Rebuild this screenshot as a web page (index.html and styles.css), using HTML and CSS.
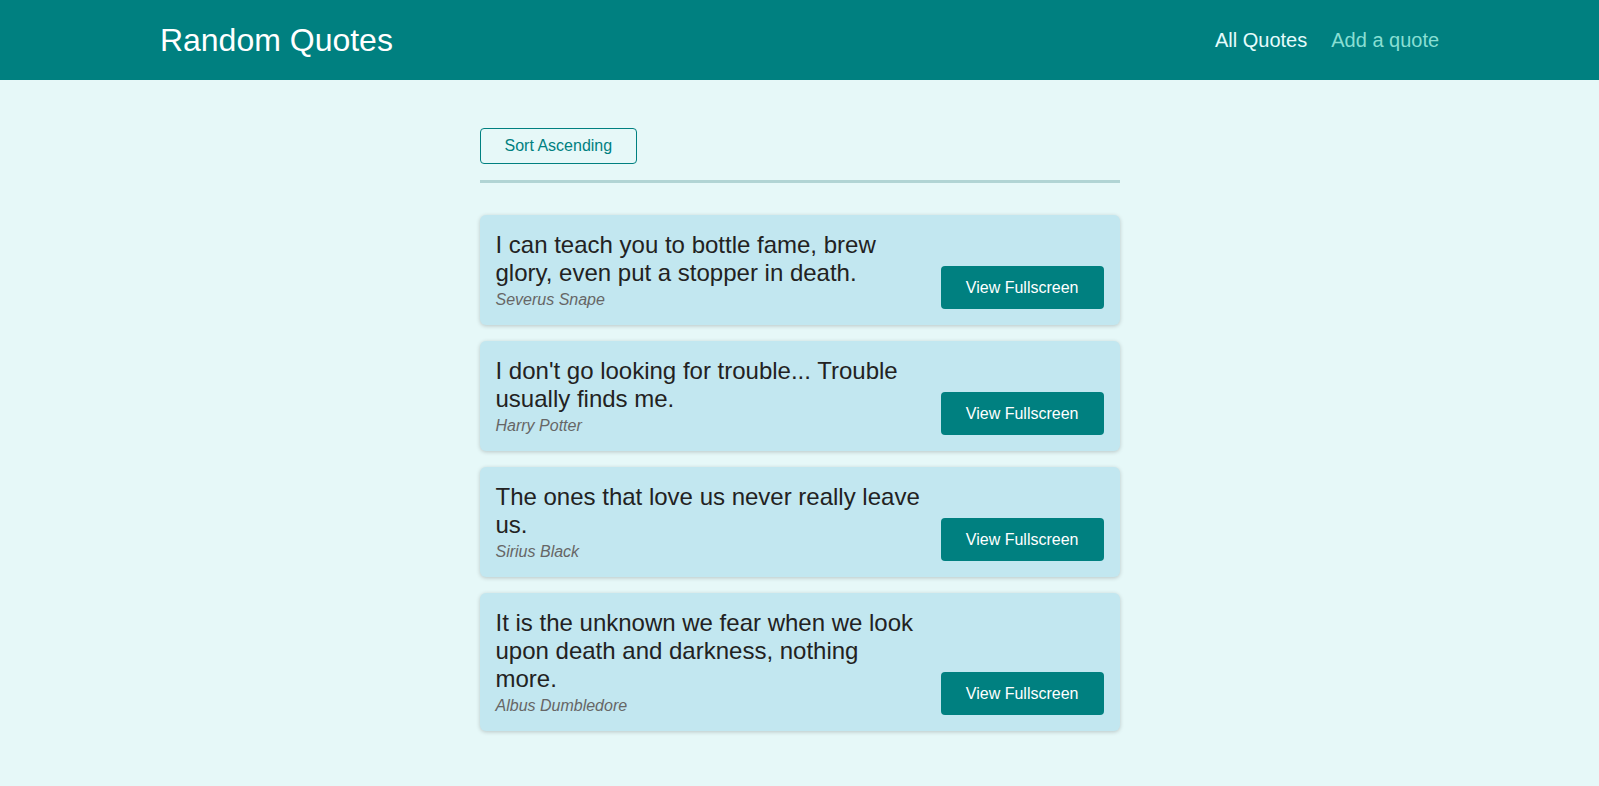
FILE: index.html
```html
<!DOCTYPE html>
<html lang="en">
<head>
<meta charset="utf-8">
<title>Random Quotes</title>
<link rel="stylesheet" href="styles.css">
</head>
<body>
<header class="header">
  <div class="logo">Random Quotes</div>
  <nav>
    <ul class="nav-list">
      <li><a class="nav-link active" href="#">All Quotes</a></li>
      <li><a class="nav-link" href="#">Add a quote</a></li>
    </ul>
  </nav>
</header>
<main class="main">
  <div class="sorting">
    <button class="sort-btn">Sort Ascending</button>
  </div>
  <ul class="list">
    <li class="item">
      <figure class="quote">
        <blockquote class="quote-text">I can teach you to bottle fame, brew glory, even put a stopper in death.</blockquote>
        <figcaption class="quote-author">Severus Snape</figcaption>
      </figure>
      <a class="btn" href="#">View Fullscreen</a>
    </li>
    <li class="item">
      <figure class="quote">
        <blockquote class="quote-text">I don't go looking for trouble... Trouble usually finds me.</blockquote>
        <figcaption class="quote-author">Harry Potter</figcaption>
      </figure>
      <a class="btn" href="#">View Fullscreen</a>
    </li>
    <li class="item">
      <figure class="quote">
        <blockquote class="quote-text">The ones that love us never really leave us.</blockquote>
        <figcaption class="quote-author">Sirius Black</figcaption>
      </figure>
      <a class="btn" href="#">View Fullscreen</a>
    </li>
    <li class="item">
      <figure class="quote">
        <blockquote class="quote-text">It is the unknown we fear when we look upon death and darkness, nothing more.</blockquote>
        <figcaption class="quote-author">Albus Dumbledore</figcaption>
      </figure>
      <a class="btn" href="#">View Fullscreen</a>
    </li>
  </ul>
</main>
</body>
</html>
```

FILE: styles.css
```css
* {
  box-sizing: border-box;
}

html {
  font-family: "Liberation Sans", Arial, sans-serif;
}

body {
  margin: 0;
  background-color: #e6f8f8;
  color: #222;
}

.header {
  width: 100%;
  height: 80px;
  display: flex;
  justify-content: space-between;
  align-items: center;
  background-color: #008080;
  padding: 0 10%;
}

.logo {
  font-size: 32px;
  color: #ffffff;
}

.nav-list {
  list-style: none;
  margin: 0;
  padding: 0;
  display: flex;
  align-items: center;
}

.nav-list li {
  margin-left: 24px;
  font-size: 20px;
}

.nav-link {
  text-decoration: none;
  color: #88dfd3;
}

.nav-link.active {
  color: #e6fcfc;
}

.main {
  width: 640px;
  margin: 32px auto;
}

.sorting {
  padding: 16px 0;
  border-bottom: 3px solid #b1d4d4;
}

.sort-btn {
  font: inherit;
  font-size: 16px;
  padding: 8px 24px;
  border: 1px solid #008080;
  border-radius: 4px;
  background: transparent;
  color: #008080;
  cursor: pointer;
}

.list {
  list-style: none;
  margin: 32px 0 0;
  padding: 0;
  display: flex;
  flex-direction: column;
  gap: 16px;
}

.item {
  display: flex;
  justify-content: space-between;
  align-items: flex-end;
  padding: 16px;
  background-color: #c2e7f0;
  border-radius: 6px;
  box-shadow: 0 1px 4px rgba(0, 0, 0, 0.2);
}

.quote {
  margin: 0;
  width: 427px;
}

.quote-text {
  margin: 0;
  font-size: 24px;
  color: #222;
}

.quote-author {
  margin-top: 4px;
  font-size: 16px;
  font-style: italic;
  color: #666;
}

.btn {
  flex-shrink: 0;
  font-size: 16px;
  text-decoration: none;
  padding: 12px 25px;
  background-color: #008080;
  color: #ffffff;
  border-radius: 4px;
  line-height: 19px;
}
```
